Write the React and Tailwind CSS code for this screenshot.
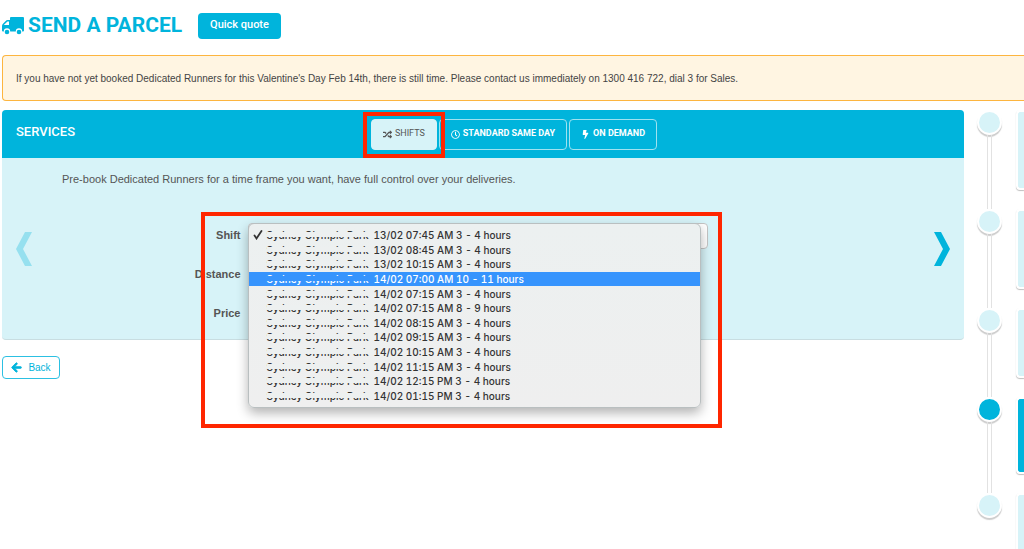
import React, { useState } from 'react';
import { FaRandom, FaRegClock, FaBolt, FaArrowLeft } from 'react-icons/fa';
import clsx from 'clsx';

const PLACE = 'Sydney Olympic Park';

const SHIFTS = [
  '13/02 07:45 AM 3 - 4 hours',
  '13/02 08:45 AM 3 - 4 hours',
  '13/02 10:15 AM 3 - 4 hours',
  '14/02 07:00 AM 10 - 11 hours',
  '14/02 07:15 AM 3 - 4 hours',
  '14/02 07:15 AM 8 - 9 hours',
  '14/02 08:15 AM 3 - 4 hours',
  '14/02 09:15 AM 3 - 4 hours',
  '14/02 10:15 AM 3 - 4 hours',
  '14/02 11:15 AM 3 - 4 hours',
  '14/02 12:15 PM 3 - 4 hours',
  '14/02 01:15 PM 3 - 4 hours',
];

const TABS = [
  { id: 'shifts', label: 'SHIFTS', icon: FaRandom },
  { id: 'standard', label: 'STANDARD SAME DAY', icon: FaRegClock },
  { id: 'demand', label: 'ON DEMAND', icon: FaBolt },
];

const STEPS = [
  { id: 'from', row: 'h-[99px]', card: 'h-[80px]' },
  { id: 'to', row: 'h-[99px]', card: 'h-[80px]' },
  { id: 'parcel', row: 'h-[89px]', card: 'h-[70px]' },
  { id: 'services', row: 'h-[96px]', card: 'h-[77px]' },
  { id: 'confirm', row: 'h-[96px]', card: 'h-[77px]' },
];

const Truck = () => (
  <svg width="22" height="18" viewBox="0 0 22 18" fill="currentColor" className="shrink-0">
    <path
      fillRule="evenodd"
      d="M9 0h12a1 1 0 0 1 1 1v12.500a1 1 0 0 1-1 1h-.8a3.200 3.200 0 0 0-6.400 0H8.200a3.200 3.200 0 0 0-6.400 0H1a1 1 0 0 1-1-1V9c0-1 .3-1.600 1-2.300L3.700 4C4.200 3.400 4.800 3 5.600 3H8V1a1 1 0 0 1 1-1zM1.800 8H7V4.600H5.400z"
    />
    <circle cx="5" cy="15" r="2.300" />
    <circle cx="17" cy="15" r="2.300" />
  </svg>
);

const Tick = () => (
  <svg width="10" height="10" viewBox="0 0 10 10" fill="none" stroke="currentColor" strokeWidth="1.8" strokeLinecap="round">
    <path d="M1.500 5.500l2 3L8.500 1" />
  </svg>
);

// Place names are partly hidden behind a bar in the row's own colour.
const HiddenPlace = ({ active }) => (
  <span className="relative w-[107px] shrink-0 whitespace-nowrap">
    {PLACE}
    <span className={clsx('absolute left-0 right-0 top-[4px] h-[5px]', active ? 'bg-[#3694fd]' : 'bg-[#edf0f0]')} />
  </span>
);

const ShiftMenu = ({ value, hovered, onHover, onPick }) => (
  <ul
    role="listbox"
    aria-label="Shift"
    className="absolute left-0 top-0 right-[7px] z-10 grid h-[185px] auto-rows-fr rounded-md border border-[#b9bfc0] bg-linear-to-b from-[#ecf0f0] to-[#efefef] py-1 font-['Inter',sans-serif] text-[10px] font-medium leading-[14px] tabular-nums text-[#333] shadow-[0_5px_12px_rgba(0,0,0,0.3)]"
  >
    {SHIFTS.map((shift, i) => (
      <li
        key={shift}
        role="option"
        aria-selected={value === i}
        onMouseEnter={() => onHover(i)}
        onClick={() => onPick(i)}
        className={clsx('flex items-center', hovered === i && 'bg-[#3694fd] text-white')}
      >
        <span className="flex w-[18px] shrink-0 justify-center">{value === i && <Tick />}</span>
        <HiddenPlace active={hovered === i} />
        <span className="whitespace-nowrap">{shift}</span>
      </li>
    ))}
  </ul>
);

const Arrow = ({ side }) => (
  <button type="button" aria-label={side === 'left' ? 'Previous service' : 'Next service'} className={side === 'left' ? 'text-[#96e0ef]' : 'text-[#00b4dc]'}>
    <svg width="16" height="36" viewBox="0 0 16 36" fill="currentColor">
      {side === 'left' ? <path d="M9 1h7L7 18l9 17H9L0 18z" /> : <path d="M0 1h7l9 17-9 17H0l9-17z" />}
    </svg>
  </button>
);

const Steps = ({ current }) => (
  <ol className="flex shrink-0 flex-col">
    {STEPS.map(({ id, row, card }, i) => (
      <li key={id} className={clsx('flex justify-between', row)}>
        <div className="flex w-[25px] flex-col items-center">
          <span
            className={clsx(
              'size-[25px] shrink-0 rounded-full border-2 border-white shadow-[0_2px_1px_rgba(0,0,0,0.2)]',
              i === current ? 'bg-[#00b4dc]' : 'bg-[#d7f3f8]'
            )}
          />
          {i < STEPS.length - 1 && <span className="w-[5px] flex-1 border-x border-[#e2e2e2]" />}
        </div>
        <div
          className={clsx(
            'w-[8px] rounded-l-sm border-2 border-r-0 border-white shadow-[0_1px_1px_rgba(0,0,0,0.25)]',
            card,
            i === current ? 'bg-[#00b4dc]' : 'bg-[#d7f3f8]'
          )}
        />
      </li>
    ))}
  </ol>
);

const App = () => {
  const [tab, setTab] = useState('shifts');
  const [shift, setShift] = useState(0);
  const [hovered, setHovered] = useState(3);

  return (
    <div className="h-screen overflow-hidden bg-white pl-[2px] font-['Liberation_Sans',Arial,sans-serif] text-[11px] text-[#555]">
      <header className="flex h-[55px] items-center pb-1">
        <span className="text-[#00b4dc]"><Truck /></span>
        <h1 className="ml-1 font-['Roboto',sans-serif] text-[21px] font-bold text-[#00b4dc]">SEND A PARCEL</h1>
        <button type="button" className="ml-4 h-[26px] rounded bg-[#00b4dc] px-3 font-['Roboto',sans-serif] font-medium text-white">Quick quote</button>
      </header>

      <div role="alert" className="flex h-[46px] items-center rounded-l border border-r-0 border-[#fdb53f] bg-[#fff5e2] px-[13px] text-[10px] text-[#444]">
        If you have not yet booked Dedicated Runners for this Valentine's Day Feb 14th, there is still time. Please contact us immediately on 1300 416 722, dial 3 for Sales.
      </div>

      <main className="flex pt-[9px]">
        <div className="min-w-0 flex-1">
          <section className="rounded border-b border-[#c8dde1] bg-[#d7f3f8]">
            <div className="flex h-[48px] items-center rounded-t bg-[#00b4dc] px-[14px] font-['Roboto',sans-serif] text-white">
              <h2 className="w-[38%] pb-1 text-[13px] font-medium">SERVICES</h2>
              <nav className="relative flex gap-[2px]">
                {TABS.map(({ id, label, icon: Icon }) => (
                  <button
                    key={id}
                    type="button"
                    onClick={() => setTab(id)}
                    className={clsx(
                      'flex h-[31px] items-center gap-[3px] rounded border px-[11px] text-[9px]',
                      tab === id ? 'border-[#d7f3f8] bg-[#d7f3f8] text-[#555]' : 'border-[#9fe2f0] font-bold'
                    )}
                  >
                    <Icon size={9} /> {label}
                  </button>
                ))}
                <span className="pointer-events-none absolute -left-2 -top-[7px] h-[46px] w-[82px] border-4 border-[#ff2600]" />
              </nav>
            </div>

            <div className="h-[181px] pt-[13px]">
              <p className="pl-[60px] leading-4">Pre-book Dedicated Runners for a time frame you want, have full control over your deliveries.</p>
              <div className="flex items-start justify-between px-[14px] pt-[36px]">
                <div className="pt-[8px]"><Arrow side="left" /></div>
                <form className="relative mr-[62px] grid w-[511px] grid-cols-[44px_1fr] gap-x-[7px] gap-y-[13px] font-bold">
                  <label htmlFor="shift" className="h-[26px] text-right leading-[24px]">Shift</label>
                  <div className="relative h-[26px]">
                    <select
                      id="shift"
                      value={shift}
                      onChange={(e) => setShift(Number(e.target.value))}
                      className="block h-[26px] w-full appearance-none rounded border border-[#c4c4c4] bg-white text-transparent"
                    >
                      {SHIFTS.map((s, i) => <option key={s} value={i}>{s}</option>)}
                    </select>
                    <ShiftMenu value={shift} hovered={hovered} onHover={setHovered} onPick={setShift} />
                  </div>
                  <span className="flex h-[26px] justify-end leading-[24px]">Distance</span>
                  <span />
                  <span className="h-[26px] text-right leading-[24px]">Price</span>
                  <span />
                  <span className="pointer-events-none absolute left-[4px] -right-[14px] -top-[11px] h-[216px] border-4 border-[#ff2600]" />
                </form>
                <div className="pt-[8px]"><Arrow side="right" /></div>
              </div>
            </div>
          </section>

          <button type="button" className="mt-4 flex h-[23px] w-[58px] items-center justify-center gap-[6px] rounded border border-[#2cc0e2] text-[10px] text-[#00b4dc]">
            <FaArrowLeft size={11} stroke="currentColor" strokeWidth={40} /> Back
          </button>
        </div>

        <div className="w-[60px] shrink-0 pl-[13px]">
          <Steps current={3} />
        </div>
      </main>
    </div>
  );
};

export default App;
